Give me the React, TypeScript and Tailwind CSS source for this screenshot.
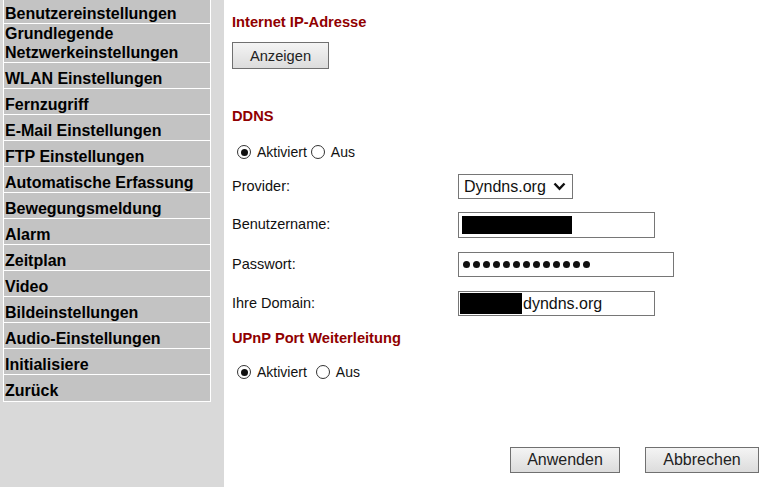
import React from "react";

const menu: string[][] = [
  ["Benutzereinstellungen"],
  ["Grundlegende", "Netzwerkeinstellungen"],
  ["WLAN Einstellungen"],
  ["Fernzugriff"],
  ["E-Mail Einstellungen"],
  ["FTP Einstellungen"],
  ["Automatische Erfassung"],
  ["Bewegungsmeldung"],
  ["Alarm"],
  ["Zeitplan"],
  ["Video"],
  ["Bildeinstellungen"],
  ["Audio-Einstellungen"],
  ["Initialisiere"],
  ["Zurück"],
];

function Radio({ checked }: { checked?: boolean }) {
  return (
    <span className="flex h-[14px] w-[14px] items-center justify-center rounded-full border border-[#333] bg-white">
      {checked && <span className="h-[7px] w-[7px] rounded-full bg-[#111]" />}
    </span>
  );
}

function RadioRow({ gap }: { gap: string }) {
  return (
    <div className="flex h-[20px] items-center pl-[5px] text-[14px] text-[#111]">
      <Radio checked />
      <span className="ml-[6px]">Aktiviert</span>
      <span className={gap}>
        <Radio />
      </span>
      <span className="ml-[6px]">Aus</span>
    </div>
  );
}

function Btn({ label, w, size }: { label: string; w: string; size: string }) {
  return (
    <button
      className={`${w} ${size} flex h-full items-center justify-center border border-[#707070] bg-gradient-to-b from-[#f4f4f4] to-[#dcdcdc] text-[#222]`}
    >
      {label}
    </button>
  );
}

export default function App() {
  return (
    <div
      className="flex min-h-screen w-full bg-white"
      style={{ fontFamily: '"Liberation Sans", Arial, sans-serif' }}
    >
      <aside className="w-[224px] shrink-0 bg-[#d9d9d9] pl-[3px]">
        <div className="w-[208px] border-x border-b border-white">
          {menu.map((lines, i) => (
            <div
              key={i}
              className={`flex flex-col justify-center border-b border-white bg-[#c3c3c3] pl-[1px] text-[16px] font-bold leading-[19px] text-black last:border-b-0 ${
                i === 0 ? "h-[24px] pt-[3px]" : i === 1 ? "h-[39px]" : "h-[26px] pt-[5px]"
              }`}
            >
              {lines.map((l) => (
                <span key={l}>{l}</span>
              ))}
            </div>
          ))}
        </div>
      </aside>

      <main className="flex flex-1 flex-col pl-[8px] pr-[11px]">
        <h2 className="mt-[14px] h-[17px] text-[14.67px] font-bold leading-[17px] text-[#900000]">
          Internet IP-Adresse
        </h2>
        <div className="mt-[11px] h-[27px]">
          <Btn label="Anzeigen" w="w-[97px]" size="text-[14.67px]" />
        </div>

        <h2 className="mt-[39px] h-[17px] text-[14.67px] font-bold leading-[17px] text-[#900000]">
          DDNS
        </h2>
        <div className="mt-[17px]">
          <RadioRow gap="ml-[4px]" />
        </div>

        <div className="mt-[12px] grid grid-cols-[226px_auto] items-center text-[14.5px] text-[#111]">
          <span>Provider:</span>
          <div className="flex h-[25px] w-[115px] items-center justify-between border border-[#767676] bg-white pl-[5px] pr-[6px] text-[16px] text-[#111]">
            <span>Dyndns.org</span>
            <svg width="13" height="9" viewBox="0 0 13 9">
              <path d="M1.5 1.5 L6.5 6.8 L11.5 1.5" fill="none" stroke="#111" strokeWidth="2.4" />
            </svg>
          </div>
        </div>

        <div className="mt-[13px] grid grid-cols-[226px_auto] items-center text-[14.5px] text-[#111]">
          <span>Benutzername:</span>
          <div className="flex h-[26px] w-[197px] items-center border border-[#767676] bg-white pl-[3px]">
            <span className="h-[18px] w-[110px] bg-black" />
          </div>
        </div>

        <div className="mt-[14px] grid grid-cols-[226px_auto] items-center text-[14.5px] text-[#111]">
          <span>Passwort:</span>
          <div className="flex h-[25px] w-[216px] items-center gap-[3px] border border-[#767676] bg-white pl-[4px]">
            {Array.from({ length: 13 }).map((_, i) => (
              <span key={i} className="h-[7px] w-[7px] rounded-full bg-[#111]" />
            ))}
          </div>
        </div>

        <div className="mt-[14px] grid grid-cols-[226px_auto] items-center text-[14.5px] text-[#111]">
          <span>Ihre Domain:</span>
          <div className="flex h-[25px] w-[197px] items-center border border-[#767676] bg-white pl-[1px] text-[16px] text-[#111]">
            <span className="h-[21px] w-[62px] bg-black" />
            <span className="ml-[1px]">dyndns.org</span>
          </div>
        </div>

        <h2 className="mt-[14px] h-[17px] text-[14.67px] font-bold leading-[17px] text-[#900000]">
          UPnP Port Weiterleitung
        </h2>
        <div className="mt-[15px]">
          <RadioRow gap="ml-[9px]" />
        </div>

        <div className="mt-[65px] flex h-[26px] justify-end gap-[25px]">
          <Btn label="Anwenden" w="w-[110px]" size="text-[16px]" />
          <Btn label="Abbrechen" w="w-[114px]" size="text-[16px]" />
        </div>
      </main>
    </div>
  );
}
